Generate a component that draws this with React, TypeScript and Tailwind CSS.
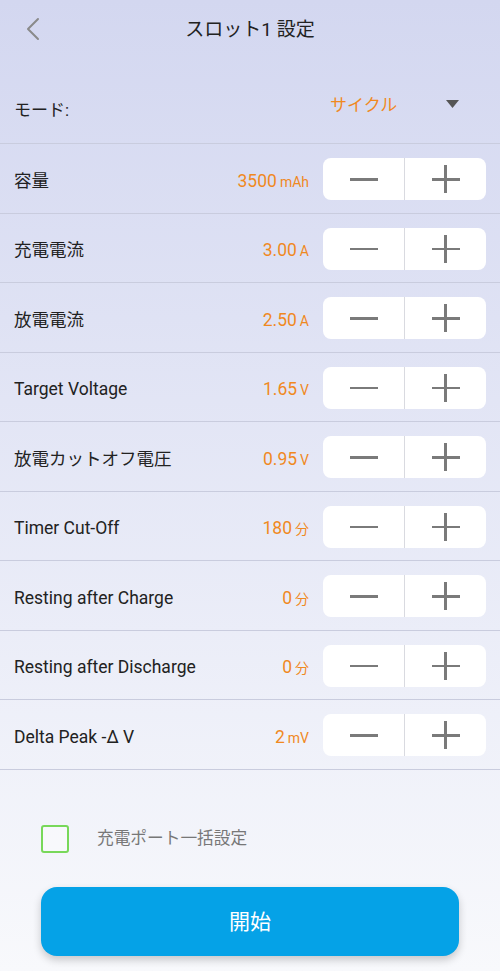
const rows = [
  { label: "容量", value: "3500", unit: "mAh" },
  { label: "充電電流", value: "3.00", unit: "A" },
  { label: "放電電流", value: "2.50", unit: "A" },
  { label: "Target Voltage", value: "1.65", unit: "V" },
  { label: "放電カットオフ電圧", value: "0.95", unit: "V" },
  { label: "Timer Cut-Off", value: "180", unit: "分" },
  { label: "Resting after Charge", value: "0", unit: "分" },
  { label: "Resting after Discharge", value: "0", unit: "分" },
  { label: "Delta Peak -Δ V", value: "2", unit: "mV" },
]

function Stepper() {
  return (
    <div className="mt-[2px] flex h-[42px] w-[163px] overflow-hidden rounded-[8px] bg-white">
      <button className="flex flex-1 items-center justify-center border-r border-[#d9dae0]">
        <span className="block h-[2.5px] w-[28px] bg-[#7a7a7a]" />
      </button>
      <button className="relative flex flex-1 items-center justify-center">
        <span className="block h-[2.5px] w-[28px] bg-[#7a7a7a]" />
        <span className="absolute h-[28px] w-[2.5px] bg-[#7a7a7a]" />
      </button>
    </div>
  )
}

export default function App() {
  return (
    <main
      className="min-h-[971px] w-full bg-gradient-to-b from-[#d3d7f0] to-[#f8f9fc] text-[#222]"
      style={{ fontFamily: 'Roboto, "Noto Sans CJK JP", sans-serif' }}
    >
      {/* Header */}
      <header className="relative flex h-[58px] items-center justify-center pt-[2px]">
        <button className="absolute left-[24px] top-[17px] p-0">
          <svg width="18" height="24" viewBox="0 0 18 24" fill="none">
            <path d="M14 2 L4 12 L14 22" stroke="#8a8a8a" strokeWidth="2" strokeLinecap="round" strokeLinejoin="round" />
          </svg>
        </button>
        <h1 className="text-[19px] text-[#222]">スロット1 設定</h1>
      </header>

      {/* Mode */}
      <div className="relative h-[86px] border-b border-[#c9ccde]">
        <span className="absolute left-[14px] top-[40px] text-[17px]">モード:</span>
        <span className="absolute left-[330px] top-[35px] text-[17px] text-[#f0891f]">サイクル</span>
        <svg className="absolute left-[446px] top-[42px]" width="13" height="8" viewBox="0 0 13 8">
          <path d="M0 0 H13 L6.5 8 Z" fill="#555" />
        </svg>
      </div>

      {/* Settings rows */}
      {rows.map((r) => (
        <div key={r.label} className="flex h-[69.5px] items-center border-b border-[#c9ccde] pl-[14px] pr-[14px]">
          <span className="mt-[5px] flex-1 text-[17.5px]">{r.label}</span>
          <span className="mr-[14px] mt-[5px] text-[17.5px] text-[#f0891f]">
            {r.value}
            <span className="ml-[3px] text-[14px]">{r.unit}</span>
          </span>
          <Stepper />
        </div>
      ))}

      {/* Batch setting */}
      <div className="mt-[55px] flex items-center pl-[41px]">
        <span className="block h-[28px] w-[28px] rounded-[3px] border-2 border-[#78d85a] bg-white/40" />
        <span className="ml-[28px] text-[16.7px] text-[#777]">充電ポート一括設定</span>
      </div>

      <div className="px-[41px] pt-[34px]">
        <button className="h-[69px] w-full rounded-[16px] bg-[#05a2e7] pt-[3px] text-[21px] text-white shadow-[0_4px_8px_rgba(0,0,0,0.2)]">
          開始
        </button>
      </div>
    </main>
  )
}
